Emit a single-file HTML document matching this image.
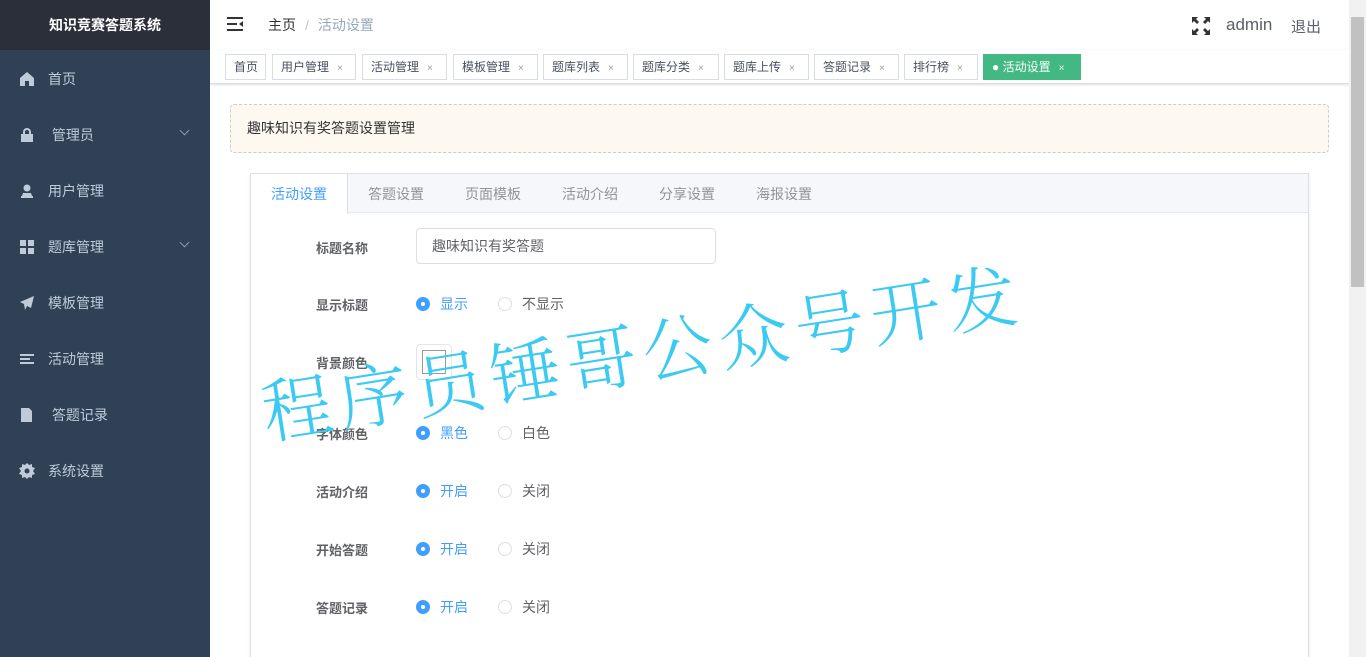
<!DOCTYPE html>
<html><head><meta charset="utf-8"><style>
*{margin:0;padding:0;box-sizing:border-box}
html,body{width:1366px;height:657px;overflow:hidden}
body{font-family:"Liberation Sans","Noto Sans CJK SC",sans-serif;font-size:14px;color:#606266;background:#fff;position:relative}
.side{position:absolute;left:0;top:0;width:210px;height:657px;background:#304156}
.logo{height:50px;background:#2b2f3a;color:#fff;font-weight:bold;font-size:14px;text-align:center;line-height:50px}
.mi{height:56px;display:flex;align-items:center;color:#bfcbd9;font-size:14px;position:relative;padding-left:19px}
.mi svg{width:16px;height:16px;margin-right:13px;fill:#bfcbd9}
.mi .ar{position:absolute;right:22px;top:20px;width:7px;height:7px;border-right:1px solid #8a97a8;border-bottom:1px solid #8a97a8;transform:rotate(45deg)}
.main{position:absolute;left:210px;top:0;width:1140px;height:657px;overflow:hidden}
.nav{height:50px;display:flex;align-items:center;position:relative}
.bc{margin-left:58px;color:#303133}
.bc span{color:#97a8be}
.bc i{color:#c0c4cc;font-style:normal;margin:0 9px}
.tags{height:34px;border-bottom:1px solid #d8dce5;box-shadow:0 1px 3px rgba(0,0,0,.12);position:relative}
.tag{position:absolute;top:4px;height:26px;border:1px solid #d8dce5;font-size:12px;color:#495060;line-height:24px;padding-left:8px}
.tag b{font-weight:normal;color:#999;font-size:10px;margin-left:8px}
.tag.on{background:#42b983;border-color:#42b983;color:#fff}
.tag.on b{color:#fff}
.tip{position:absolute;left:20px;top:104px;width:1099px;height:49px;border:1px dashed #ccc;border-radius:4px;background:#fdf8f0;line-height:47px;padding-left:16px;color:#333;font-size:14px}
.card{position:absolute;left:40px;top:173px;width:1059px;height:500px;border:1px solid #dcdfe6;box-shadow:0 2px 4px rgba(0,0,0,.08)}
.th{height:39px;background:#f5f7fa;border-bottom:1px solid #e4e7ed;position:relative}
.th div{position:absolute;top:0;line-height:40px;color:#909399;font-size:14px}
.th .act{background:#fff;color:#409eff;left:0;width:97px;height:40px;text-align:center;border-right:1px solid #dcdfe6}
.lbl{position:absolute;left:65px;font-weight:bold;color:#606266;font-size:13px}
.rad{position:absolute;display:flex;align-items:center;font-size:14px}
.c{width:14px;height:14px;border-radius:50%;border:1px solid #dcdfe6;margin-right:10px;background:#fff}
.c.on{background:#409eff;border-color:#409eff;position:relative}
.c.on:after{content:"";position:absolute;left:4px;top:4px;width:4px;height:4px;border-radius:50%;background:#fff}
.wm{position:absolute;left:262px;top:370px;font-family:"Noto Serif CJK SC",serif;font-size:70px;color:#3ccaf2;letter-spacing:7px;transform:rotate(-9deg);transform-origin:0 50%;white-space:nowrap;font-weight:300;line-height:80px}
.sb{position:absolute;right:0;top:0;width:17px;height:657px;background:#f1f1f1}
.sb div{position:absolute;left:2px;top:17px;width:13px;height:270px;background:#c1c1c1}
</style></head><body>
<div class="side">
<div class="logo">知识竞赛答题系统</div>
<div class="mi" style="margin-top:1px"><svg viewBox="0 0 16 16"><path d="M8 1L1 7v8h5v-5h4v5h5V7z"/></svg>首页</div>
<div class="mi"><svg viewBox="0 0 16 16"><path d="M4 7V5a4 4 0 018 0v2h2v8H2V7zm2 0h4V5a2 2 0 00-4 0z"/></svg>&nbsp;管理员<span class="ar"></span></div>
<div class="mi"><svg viewBox="0 0 16 16"><circle cx="8" cy="5" r="3.5"/><path d="M2 13h12v2H2zM4 10h8l1 3H3z"/></svg>用户管理</div>
<div class="mi"><svg viewBox="0 0 16 16"><path d="M1 1h6v6H1zM9 1h6v6H9zM1 9h6v6H1zM9 9h6v6H9z"/></svg>题库管理<span class="ar"></span></div>
<div class="mi"><svg viewBox="0 0 16 16"><path d="M15 1L1 7l4 2 1 6 2-4 4 2z"/></svg>模板管理</div>
<div class="mi"><svg viewBox="0 0 16 16"><path d="M1 3h14v2H1zM1 7h10v2H1zM1 11h14v2H1z"/></svg>活动管理</div>
<div class="mi"><svg viewBox="0 0 16 16"><path d="M2 1h8l3 3v11H2zM5 6h5v1H5zM5 9h5v1H5z"/></svg>&nbsp;答题记录</div>
<div class="mi"><svg viewBox="0 0 16 16"><path d="M8 0l2 2 3-1 0 3 3 1-2 3 2 3-3 1 0 3-3-1-2 2-2-2-3 1 0-3-3-1 2-3-2-3 3-1 0-3 3 1z"/><circle cx="8" cy="8" r="2.5" fill="#304156"/></svg>系统设置</div>
</div>
<div class="main">
<div class="nav">
<svg style="position:absolute;left:17px;top:17px" width="16" height="14" viewBox="0 0 16 14"><path d="M0 0h16v2H0zM0 6h10v2H0zM0 12h16v2H0zM16 4v6l-4-3z" fill="#333"/></svg>
<div class="bc">主页<i>/</i><span>活动设置</span></div>
<svg style="position:absolute;left:982px;top:17px" width="18" height="18" viewBox="0 0 18 18" fill="#333"><path d="M0 0h6l-2 2 3 3-2 2-3-3-2 2zM18 0v6l-2-2-3 3-2-2 3-3-2-2zM0 18v-6l2 2 3-3 2 2-3 3 2 2zM18 18h-6l2-2-3-3 2-2 3 3 2-2z"/></svg>
<div style="position:absolute;left:1016px;top:15px;font-size:17px;color:#5a5e66">admin</div>
<div style="position:absolute;left:1081px;top:16px;font-size:15px;color:#5a5e66">退出</div>
</div>
<div class="tags">
<div class="tag" style="left:15px;width:41px">首页</div>
<div class="tag" style="left:62px;width:84px">用户管理<b>×</b></div>
<div class="tag" style="left:152px;width:85px">活动管理<b>×</b></div>
<div class="tag" style="left:243px;width:85px">模板管理<b>×</b></div>
<div class="tag" style="left:333px;width:85px">题库列表<b>×</b></div>
<div class="tag" style="left:423px;width:86px">题库分类<b>×</b></div>
<div class="tag" style="left:514px;width:85px">题库上传<b>×</b></div>
<div class="tag" style="left:604px;width:85px">答题记录<b>×</b></div>
<div class="tag" style="left:694px;width:74px">排行榜<b>×</b></div>
<div class="tag on" style="left:773px;width:98px">● 活动设置<b>×</b></div>
</div>
<div class="tip">趣味知识有奖答题设置管理</div>
<div class="card">
<div class="th"><div class="act">活动设置</div><div style="left:117px">答题设置</div><div style="left:214px">页面模板</div><div style="left:311px">活动介绍</div><div style="left:408px">分享设置</div><div style="left:505px">海报设置</div></div>
<div class="lbl" style="top:64px">标题名称</div>
<div style="position:absolute;left:165px;top:54px;width:300px;height:36px;border:1px solid #dcdfe6;border-radius:4px;line-height:34px;padding-left:15px;color:#606266">趣味知识有奖答题</div>
<div class="lbl" style="top:121px">显示标题</div>
<div class="rad" style="left:165px;top:120px;color:#409eff"><span class="c on"></span>显示</div>
<div class="rad" style="left:247px;top:120px"><span class="c"></span>不显示</div>
<div class="lbl" style="top:179px">背景颜色</div>
<div style="position:absolute;left:165px;top:170px;width:36px;height:36px;border:1px solid #e6e6e6;border-radius:4px;padding:5px"><div style="width:24px;height:24px;border:1px solid #999"></div></div>
<div class="lbl" style="top:250px">字体颜色</div>
<div class="rad" style="left:165px;top:249px;color:#409eff"><span class="c on"></span>黑色</div>
<div class="rad" style="left:247px;top:249px"><span class="c"></span>白色</div>
<div class="lbl" style="top:308px">活动介绍</div>
<div class="rad" style="left:165px;top:307px;color:#409eff"><span class="c on"></span>开启</div>
<div class="rad" style="left:247px;top:307px"><span class="c"></span>关闭</div>
<div class="lbl" style="top:366px">开始答题</div>
<div class="rad" style="left:165px;top:365px;color:#409eff"><span class="c on"></span>开启</div>
<div class="rad" style="left:247px;top:365px"><span class="c"></span>关闭</div>
<div class="lbl" style="top:424px">答题记录</div>
<div class="rad" style="left:165px;top:423px;color:#409eff"><span class="c on"></span>开启</div>
<div class="rad" style="left:247px;top:423px"><span class="c"></span>关闭</div>
</div>
</div>
<div class="wm">程序员锤哥公众号开发</div>
<div class="sb"><div></div></div>
</body></html>
